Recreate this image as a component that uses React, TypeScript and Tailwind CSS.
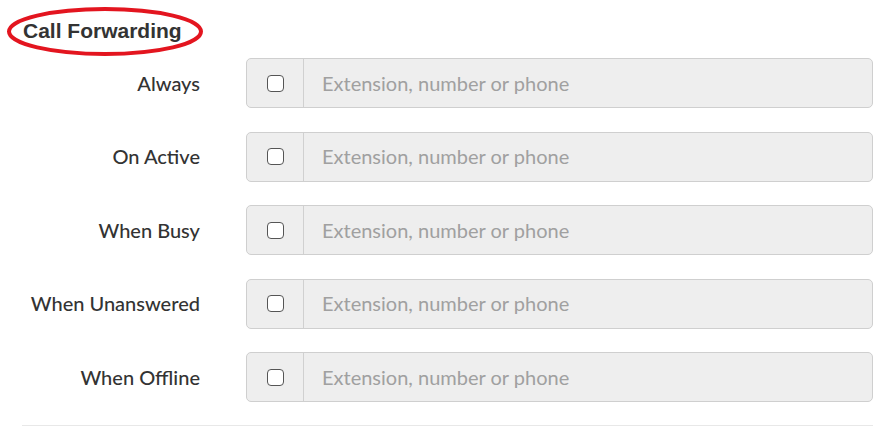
import React from "react";

const rows = ["Always", "On Active", "When Busy", "When Unanswered", "When Offline"];

export default function App() {
  return (
    <div className="w-[892px] h-[426px] bg-white overflow-hidden" style={{ fontFamily: "Lato, 'Noto Sans', sans-serif" }}>
      <div className="relative pl-[23px] pt-[17px] h-[58px]">
        <h2 className="text-[21px] font-bold text-[#333] leading-[28px]" style={{ fontFamily: "'Liberation Sans', Arial, sans-serif" }}>
          Call Forwarding
        </h2>
        <svg className="absolute left-0 top-0" width="220" height="60" viewBox="0 0 220 60">
          <ellipse cx="105" cy="31.5" rx="96" ry="22.5" fill="none" stroke="#e3151f" strokeWidth="4" />
        </svg>
      </div>
      <div className="flex flex-col gap-[23.5px] pr-[19px]">
        {rows.map((r) => (
          <div key={r} className="flex items-center">
            <label className="w-[201px] pr-[1px] pb-[1px] text-right text-[20px] font-medium text-[#333]">{r}</label>
            <div className="ml-[45px] flex-1 h-[50px] flex rounded-[5px] border border-[#cfcfcf] bg-[#eeeeee]">
              <div className="w-[57px] flex items-center justify-center border-r border-[#d0d0d0]">
                <span className="block w-[17px] h-[17px] rounded-[4px] border border-[#555] bg-white" />
              </div>
              <div className="flex-1 flex items-center pl-[18px] pb-[1px] text-[20px] text-[#a0a0a0]">
                Extension, number or phone
              </div>
            </div>
          </div>
        ))}
      </div>
      <div className="ml-[22px] mr-[19px] mt-[23px] border-t border-[#e8e8e8]" />
    </div>
  );
}
